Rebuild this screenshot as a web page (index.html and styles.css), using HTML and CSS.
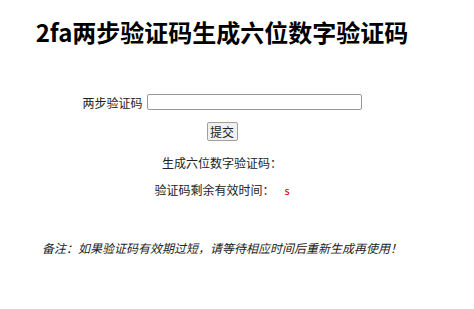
FILE: index.html
```html
<!DOCTYPE html>
<html>
<head>
  <meta charset="UTF-8">
  <title>2fa两步验证码生成六位数字验证码</title>
  <link rel="stylesheet" href="styles.css">
</head>
<body>
  <div class="page">
    <h1 class="title">2fa两步验证码生成六位数字验证码</h1>

    <form class="form" id="codeForm">
      <div class="field">
        <label for="secretInput">两步验证码</label>
        <input type="text" id="secretInput">
      </div>
      <button type="submit" class="submitBtn">提交</button>
    </form>

    <p class="result">生成六位数字验证码：<span id="codeText"></span></p>
    <p class="result">验证码剩余有效时间：<span class="seconds" id="secondsText">s</span></p>

    <p class="note">备注：如果验证码有效期过短，请等待相应时间后重新生成再使用！</p>
  </div>
</body>
</html>
```

FILE: styles.css
```css
body {
  margin: 0;
  font-family: "Noto Sans CJK SC", "Liberation Sans", sans-serif;
  font-size: 12px;
  color: #222;
  background-color: #fff;
}

.page {
  width: 444px;
  padding-top: 17px;
  text-align: center;
}

.title {
  margin: 0;
  font-size: 24px;
  line-height: 30px;
  font-weight: bold;
  color: #000;
}

.form {
  margin: 46px 0 0;
  display: flex;
  flex-direction: column;
  align-items: center;
}

.field {
  display: flex;
  align-items: center;
  gap: 4px;
  height: 18px;
}

.field input {
  width: 215px;
  height: 16px;
  box-sizing: border-box;
  border: 1px solid #999;
  border-radius: 2px;
  padding: 0 3px;
  outline: none;
}

.submitBtn {
  margin-top: 11px;
  height: 19px;
  width: 31px;
  padding: 0;
  font-family: inherit;
  font-size: 12px;
  line-height: 17px;
  color: #222;
  background-color: #f0f0f0;
  border: 1px solid #a0a0a0;
  border-radius: 2px;
}

.result {
  margin: 13px 0 0;
  line-height: 18px;
}

.result + .result {
  margin-top: 9px;
}

.seconds {
  margin-left: 10px;
  color: #c00;
  font-size: 11px;
}

.note {
  margin: 40px 0 0;
  line-height: 18px;
  font-style: italic;
}
```
